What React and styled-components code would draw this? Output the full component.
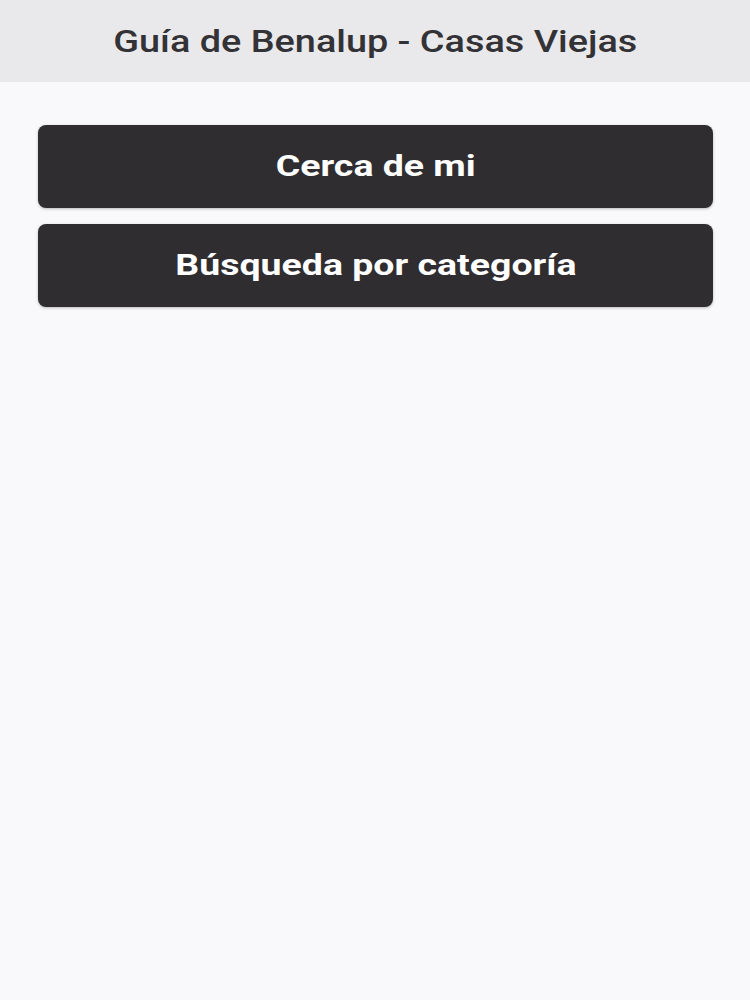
import React from "react";
import styled, { createGlobalStyle } from "styled-components";

const Global = createGlobalStyle`
  html, body { margin: 0; padding: 0; background: #f9f8fa; }
  body { font-family: Roboto, "Liberation Sans", sans-serif; }
`;

const Page = styled.div`
  min-height: 1000px;
  background: #f9f8fa;
`;

const Header = styled.header`
  height: 82px;
  background: #e9e8ea;
  display: flex;
  align-items: center;
  justify-content: center;
`;

const Title = styled.h1`
  margin: 0;
  font-family: Roboto, "Liberation Sans", sans-serif;
  font-weight: 500;
  font-size: 30.5px;
  line-height: 1;
  color: #333236;
  transform: scaleX(1.24);
  padding-top: 2px;
`;

const Menu = styled.nav`
  display: flex;
  flex-direction: column;
  gap: 16px;
  padding: 43px 37px 0 38px;
`;

const MenuButton = styled.button`
  height: 83px;
  border: none;
  border-radius: 8px;
  background: #2f2d30;
  box-shadow: 0 1px 3px rgba(0, 0, 0, 0.25);
  cursor: pointer;
  display: flex;
  align-items: center;
  justify-content: center;
  padding: 0;
`;

const Label = styled.span`
  display: inline-block;
  color: #ffffff;
  font-family: Roboto, "Liberation Sans", sans-serif;
  font-weight: 700;
  font-size: 29.5px;
  line-height: 1;
  transform: scaleX(1.27);
`;

export default function App() {
  return (
    <Page>
      <Global />
      <Header>
        <Title>Guía de Benalup - Casas Viejas</Title>
      </Header>
      <Menu>
        <MenuButton>
          <Label>Cerca de mi</Label>
        </MenuButton>
        <MenuButton>
          <Label>Búsqueda por categoría</Label>
        </MenuButton>
      </Menu>
    </Page>
  );
}
